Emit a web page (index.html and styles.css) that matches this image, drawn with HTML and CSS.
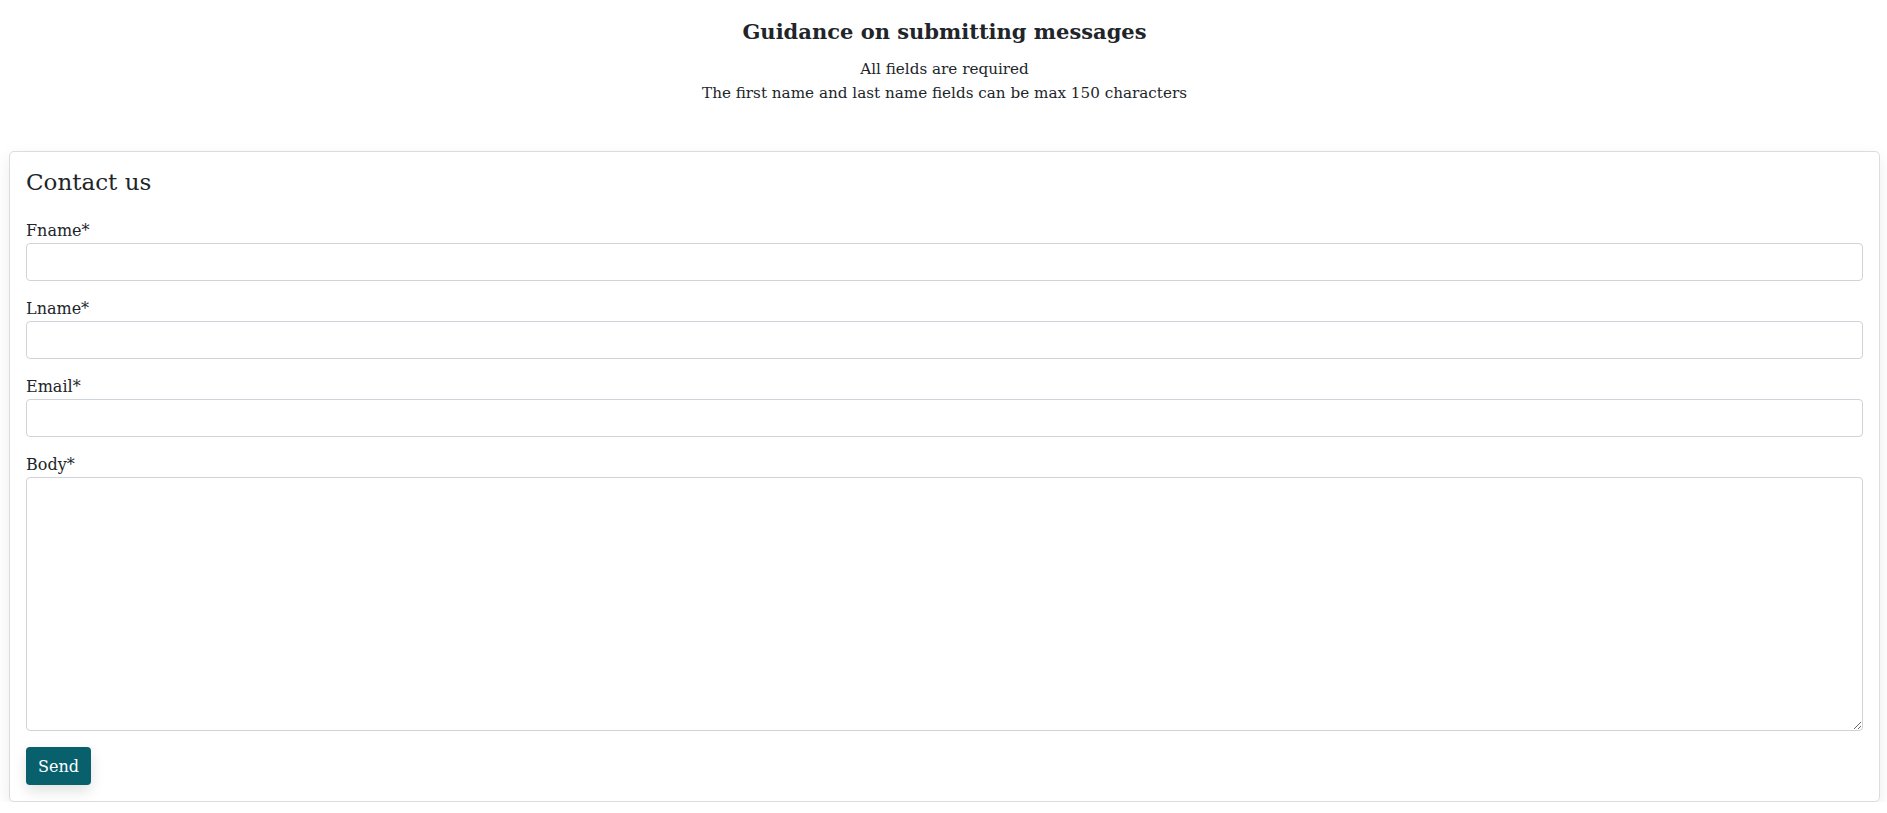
FILE: index.html
```html
<!DOCTYPE html>
<html lang="en">
<head>
<meta charset="utf-8">
<title>Contact us</title>
<link rel="stylesheet" href="styles.css">
</head>
<body>
<header class="guidance">
  <h1 class="guidance-title">Guidance on submitting messages</h1>
  <p class="guidance-line">All fields are required</p>
  <p class="guidance-line">The first name and last name fields can be max 150 characters</p>
</header>
<main class="card">
  <h2 class="card-title">Contact us</h2>
  <form class="contact-form">
    <div class="field">
      <label class="field-label" for="fname">Fname*</label>
      <input class="field-input" id="fname" type="text">
    </div>
    <div class="field">
      <label class="field-label" for="lname">Lname*</label>
      <input class="field-input" id="lname" type="text">
    </div>
    <div class="field">
      <label class="field-label" for="email">Email*</label>
      <input class="field-input" id="email" type="email">
    </div>
    <div class="field">
      <label class="field-label" for="body">Body*</label>
      <textarea class="field-input field-textarea" id="body" rows="10"></textarea>
    </div>
    <div class="actions">
      <button class="send-btn" type="button">Send</button>
    </div>
  </form>
</main>
</body>
</html>
```

FILE: styles.css
```css
* { box-sizing: border-box; }
html, body { margin: 0; padding: 0; }
body {
  background: #fff;
  color: #212529;
  font-family: "DejaVu Serif", serif;
  font-size: 15.2px;
  line-height: 24px;
  padding: 0 7px 0 9px;
}
.guidance {
  text-align: center;
  padding-top: 16px;
  padding-bottom: 46px;
}
.guidance-title {
  font-size: 21px;
  font-weight: bold;
  line-height: 31px;
  margin: 0 0 10px;
  color: #212529;
}
.guidance-line {
  margin: 0;
}
.card {
  background: #fff;
  border: 1px solid #dcdcdc;
  border-radius: 5px;
  box-shadow: 0 6px 16px rgba(0, 0, 0, 0.08);
  padding: 16px;
}
.card-title {
  font-size: 23px;
  font-weight: normal;
  line-height: 29px;
  margin: 0 0 22px;
}
.contact-form {
  display: flex;
  flex-direction: column;
  gap: 16px;
}
.field {
  display: flex;
  flex-direction: column;
}
.field-label {
  font-size: 16px;
  line-height: 24px;
}
.field-input {
  display: block;
  width: 100%;
  height: 38px;
  border: 1px solid #ced4da;
  border-radius: 4px;
  padding: 6px 12px;
  font-family: inherit;
  font-size: 15px;
  background: #fff;
}
.field-textarea {
  height: 254px;
  resize: vertical;
}
.actions { display: flex; }
.send-btn {
  background: #07606c;
  color: #fff;
  border: 0;
  border-radius: 4px;
  height: 38px;
  padding: 0 12px;
  font-family: inherit;
  font-size: 16px;
  box-shadow: 0 6px 14px rgba(0, 0, 0, 0.12);
}
```
